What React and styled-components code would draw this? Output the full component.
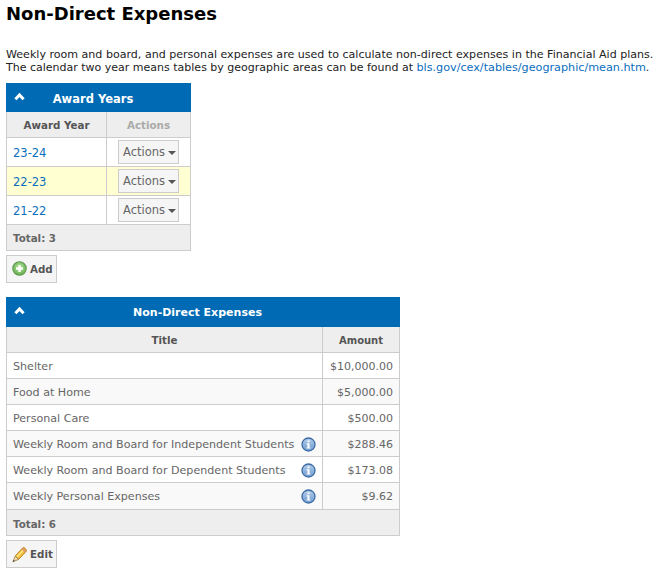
import React from "react";
import styled, { createGlobalStyle } from "styled-components";

const Global = createGlobalStyle`
  html, body { margin: 0; padding: 0; background: #fff; }
  body { font-family: "DejaVu Sans", Verdana, sans-serif; font-size: 11px; color: #222; }
`;
const Page = styled.div`
  padding: 0 6px;
  display: flex;
  flex-direction: column;
  align-items: flex-start;
`;
const Title = styled.h1`
  margin: 3px 0 0;
  font-size: 18px;
  line-height: 22px;
  font-weight: bold;
  color: #000;
`;
const Intro = styled.div`
  margin-top: 23px;
  color: #222;
  white-space: nowrap;
`;
const IntroLine = styled.div`
  font-size: ${(p) => p.$size}px;
  line-height: 13px;
`;
const Link = styled.a`
  color: #0a6ebd;
  text-decoration: none;
`;
const SourceLink = styled(Link)`
  font-size: 11.2px;
`;
const YearLink = styled(Link)`
  font-size: 11.5px;
  position: relative;
  top: 1px;
`;
const Panel = styled.div`
  width: ${(p) => p.$width}px;
  margin-top: ${(p) => p.$top}px;
`;
const PanelHeader = styled.div`
  box-sizing: border-box;
  height: ${(p) => p.$height}px;
  padding: 2px 11px 0 0;
  background: #006bb4;
  color: #fff;
  font-weight: bold;
  font-size: ${(p) => p.$size}px;
  display: flex;
  align-items: center;
  justify-content: center;
  position: relative;
`;
const Chevron = styled.svg`
  position: absolute;
  left: 8px;
  top: 50%;
  margin-top: -6px;
  width: 11px;
  height: 9px;
`;
const Table = styled.table`
  width: 100%;
  border-collapse: collapse;
  table-layout: fixed;
  font-size: 11px;
`;
const Th = styled.th`
  height: ${(p) => p.$height}px;
  padding: 2px 0 0;
  box-sizing: border-box;
  background: #eeeeee;
  border: 1px solid #ccc;
  border-top: 0;
  color: ${(p) => (p.$muted ? "#aaa" : "#555")};
  font-size: 10.3px;
  font-weight: bold;
  text-align: center;
`;
const AmountHead = styled(Th)`
  font-size: 10px;
`;
const Td = styled.td`
  height: ${(p) => p.$height}px;
  padding: ${(p) => p.$pad || 0}px 6px 0;
  box-sizing: ${(p) => (p.$pad ? "border-box" : "content-box")};
  border: 1px solid #ccc;
  background: ${(p) => p.$bg || "#fff"};
  color: #666;
  text-align: ${(p) => p.$align || "left"};
  white-space: nowrap;
`;
const ActionsCell = styled(Td)`
  padding: 0 0 0 11px;
`;
const FooterCell = styled.td`
  padding: 2px 6px 0;
  box-sizing: content-box;
  height: 23px;
  background: #eeeeee;
  border: 1px solid #ccc;
  color: #666;
  font-size: 10.3px;
  font-weight: bold;
`;
const ActionsButton = styled.div`
  box-sizing: border-box;
  width: 61px;
  height: 24px;
  display: flex;
  align-items: center;
  gap: 3px;
  padding: 1px 0 0 4px;
  font-size: 11.5px;
  background: #f5f5f5;
  border: 1px solid #ccc;
  color: #666;
`;
const Caret = styled.span`
  width: 0;
  height: 0;
  margin-top: 2px;
  border-left: 4.5px solid transparent;
  border-right: 4.5px solid transparent;
  border-top: 4.5px solid #555;
`;
const TitleCell = styled.div`
  display: flex;
  align-items: center;
  justify-content: space-between;
  font-size: 11.1px;
`;
const Button = styled.div`
  box-sizing: border-box;
  height: 28px;
  width: 51px;
  margin-top: 4px;
  padding: 0 0 0 5px;
  display: inline-flex;
  align-items: center;
  gap: 3px;
  background: #f5f5f5;
  border: 1px solid #ccc;
  color: #555;
  font-size: 10.3px;
  font-weight: bold;
`;
const ButtonIcon = styled.svg`
  flex: none;
`;

const ChevronUp = () => (
  <Chevron viewBox="0 0 11 9">
    <path d="M1.4 7.2 L5.5 3 L9.6 7.2" fill="none" stroke="#fff" strokeWidth="3" />
  </Chevron>
);
const InfoIcon = () => (
  <svg width="15" height="15" viewBox="0 0 15 15">
    <defs>
      <linearGradient id="ig" x1="0" y1="0" x2="0" y2="1">
        <stop offset="0" stopColor="#b3cdea" />
        <stop offset="1" stopColor="#6f9bd0" />
      </linearGradient>
    </defs>
    <circle cx="7.5" cy="7.5" r="6.5" fill="url(#ig)" stroke="#3d6ca6" strokeWidth="1.3" />
    <rect x="6.5" y="3.4" width="2" height="1.8" fill="#fff" />
    <path d="M5.6 6.2 H8.5 V10.4 H9.5 V11.6 H5.6 V10.4 H6.5 V7.4 H5.6 Z" fill="#fff" />
  </svg>
);
const AddIcon = () => (
  <ButtonIcon width="15" height="15" viewBox="0 0 15 15">
    <defs>
      <radialGradient id="ag" cx="0.5" cy="0.4" r="0.7">
        <stop offset="0" stopColor="#b5e29a" />
        <stop offset="1" stopColor="#58a844" />
      </radialGradient>
    </defs>
    <circle cx="7.5" cy="7.5" r="6.7" fill="url(#ag)" stroke="#5f9a52" strokeWidth="1.1" />
    <path d="M7.5 4 V11 M4 7.5 H11" stroke="#fff" strokeWidth="2.4" />
  </ButtonIcon>
);
const EditIcon = () => (
  <ButtonIcon width="15" height="17" viewBox="0 0 15 17">
    <path d="M3.2 10.2 L10.4 2.2 a1.9 1.9 0 0 1 2.8 0.3 l0.6 0.6 a1.9 1.9 0 0 1 0 2.6 L6.6 13.4 Z" fill="#f5c23c" stroke="#b67e1c" strokeWidth="1" />
    <path d="M5 10.8 L11.6 3.8" stroke="#fde68a" strokeWidth="1.4" />
    <path d="M10.2 2.4 L13.8 5.8" stroke="#dc8f72" strokeWidth="1.6" />
    <path d="M3.2 10.2 L6.6 13.4 L0.9 15.8 Z" fill="#f3dcae" stroke="#9c7a46" strokeWidth="0.8" />
    <path d="M1.7 13.8 L2.9 14.9 L0.9 15.8 Z" fill="#3c3c3c" />
  </ButtonIcon>
);

const years = [
  { y: "23-24" },
  { y: "22-23", bg: "#ffffd2" },
  { y: "21-22" },
];
const expenses = [
  { t: "Shelter", a: "$10,000.00", h: 26 },
  { t: "Food at Home", a: "$5,000.00", bg: "#f9f9f9", h: 26 },
  { t: "Personal Care", a: "$500.00", h: 26 },
  { t: "Weekly Room and Board for Independent Students", a: "$288.46", bg: "#f9f9f9", i: true, h: 26 },
  { t: "Weekly Room and Board for Dependent Students", a: "$173.08", i: true, h: 26 },
  { t: "Weekly Personal Expenses", a: "$9.62", bg: "#f9f9f9", i: true, h: 27 },
];

export default function App() {
  return (
    <Page>
      <Global />
      <Title>Non-Direct Expenses</Title>
      <Intro>
        <IntroLine $size={11.07}>
          Weekly room and board, and personal expenses are used to calculate non-direct expenses in the Financial Aid plans.
        </IntroLine>
        <IntroLine $size={11}>
          The calendar two year means tables by geographic areas can be found at{" "}
          <SourceLink href="#">bls.gov/cex/tables/geographic/mean.htm</SourceLink>.
        </IntroLine>
      </Intro>
      <Panel $width={185} $top={9}>
        <PanelHeader $height={29} $size={11.5}>
          <ChevronUp />
          Award Years
        </PanelHeader>
        <Table>
          <colgroup>
            <col style={{ width: 100 }} />
            <col />
          </colgroup>
          <thead>
            <tr>
              <Th $height={25}>Award Year</Th>
              <Th $height={25} $muted>Actions</Th>
            </tr>
          </thead>
          <tbody>
            {years.map((r) => (
              <tr key={r.y}>
                <Td $height={28} $bg={r.bg}>
                  <YearLink href="#">{r.y}</YearLink>
                </Td>
                <ActionsCell $height={28} $bg={r.bg}>
                  <ActionsButton>
                    Actions
                    <Caret />
                  </ActionsButton>
                </ActionsCell>
              </tr>
            ))}
            <tr>
              <FooterCell colSpan={2}>Total: 3</FooterCell>
            </tr>
          </tbody>
        </Table>
      </Panel>
      <Button>
        <AddIcon />
        Add
      </Button>
      <Panel $width={394} $top={14}>
        <PanelHeader $height={30} $size={11}>
          <ChevronUp />
          Non-Direct Expenses
        </PanelHeader>
        <Table>
          <colgroup>
            <col />
            <col style={{ width: 77 }} />
          </colgroup>
          <thead>
            <tr>
              <Th $height={26}>Title</Th>
              <AmountHead $height={26}>Amount</AmountHead>
            </tr>
          </thead>
          <tbody>
            {expenses.map((r) => (
              <tr key={r.t}>
                <Td $height={r.h} $pad={1} $bg={r.bg}>
                  <TitleCell>
                    {r.t}
                    {r.i && <InfoIcon />}
                  </TitleCell>
                </Td>
                <Td $height={r.h} $pad={1} $bg={r.bg} $align="right">
                  {r.a}
                </Td>
              </tr>
            ))}
            <tr>
              <FooterCell colSpan={2}>Total: 6</FooterCell>
            </tr>
          </tbody>
        </Table>
      </Panel>
      <Button>
        <EditIcon />
        Edit
      </Button>
    </Page>
  );
}
